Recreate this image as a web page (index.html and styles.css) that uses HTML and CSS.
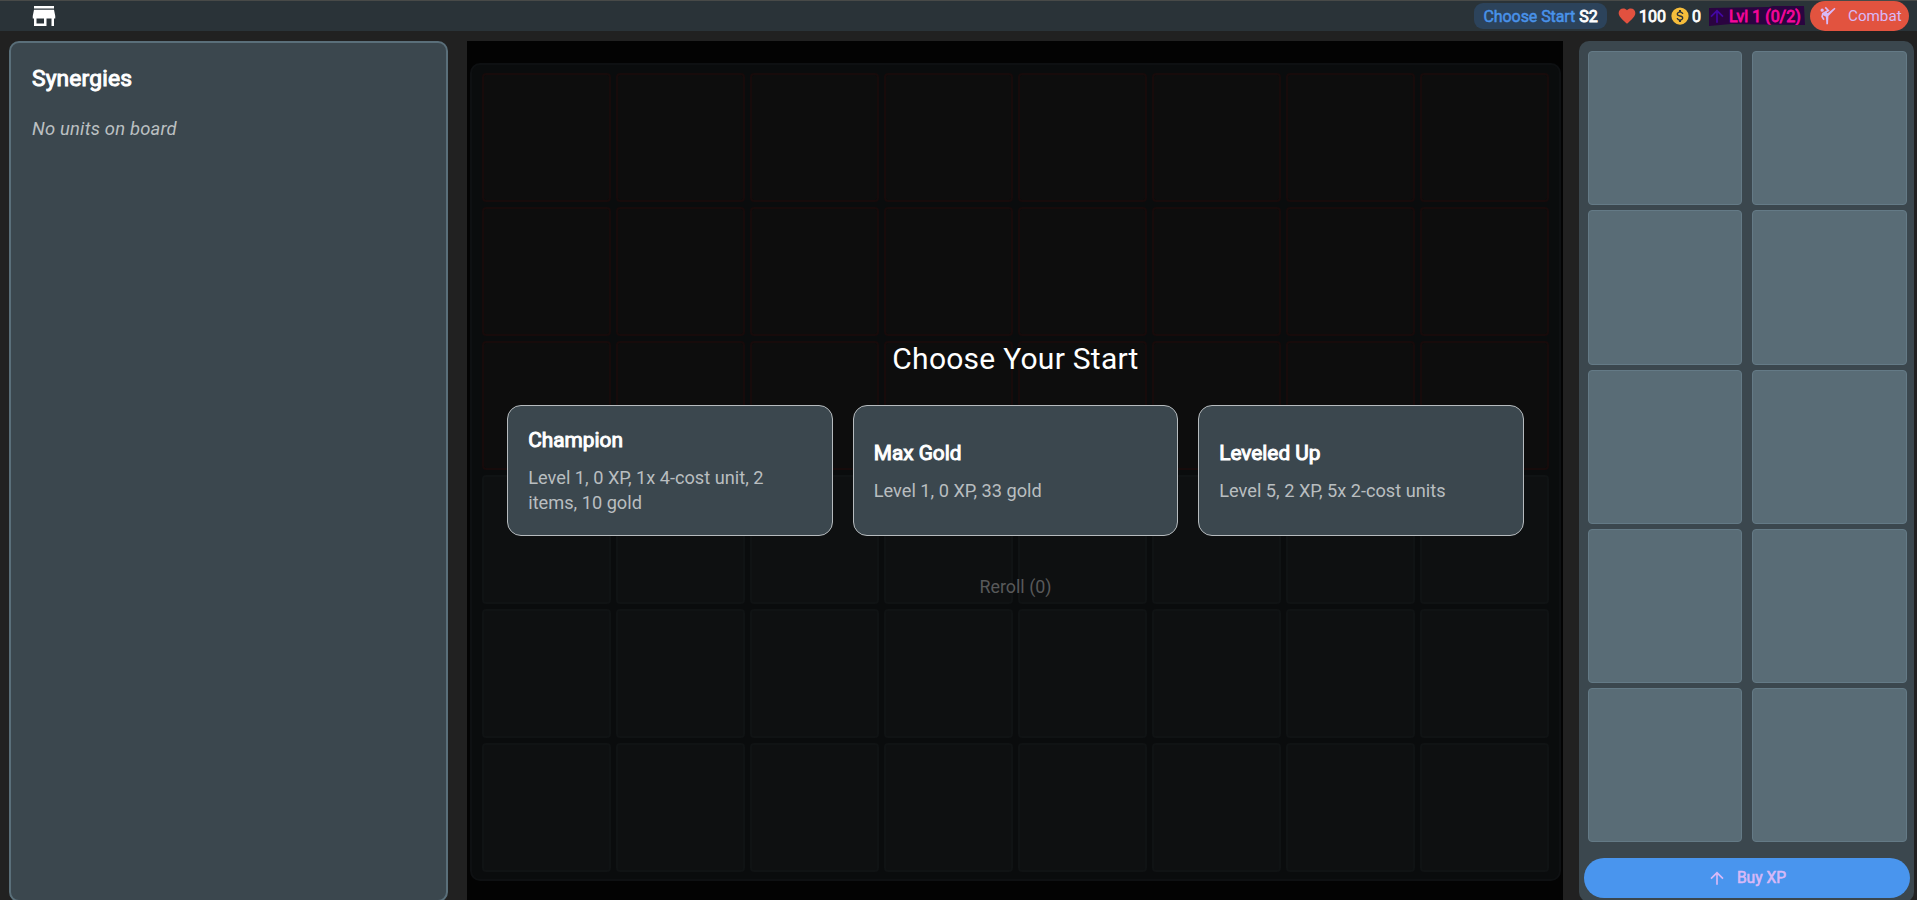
FILE: index.html
```html
<!DOCTYPE html>
<html lang="en">
<head>
<meta charset="utf-8">
<title>Choose Your Start</title>
<link rel="stylesheet" href="styles.css">
</head>
<body>
<header class="topbar">
  <svg class="store" viewBox="0 0 24 24"><path d="M12,18H6V14H12M21,14V12L20,7H4L3,12V14H4V20H14V14H18V20H20V14M20,4H4V6H20V4Z"/></svg>
  <div class="status">
    <div class="phase"><span class="phase-name">Choose Start</span><b>S2</b></div>
    <div class="stat health"><svg viewBox="0 0 24 24"><path d="M12,21.35L10.55,20.03C5.4,15.36 2,12.27 2,8.5C2,5.41 4.42,3 7.5,3C9.24,3 10.91,3.81 12,5.08C13.09,3.81 14.76,3 16.5,3C19.58,3 22,5.41 22,8.5C22,12.27 18.6,15.36 13.45,20.03L12,21.35Z"/></svg><b>100</b></div>
    <div class="stat gold"><svg viewBox="0 0 24 24"><circle cx="12" cy="12" r="11.5" fill="#f6bd3b"/><path fill="#2b3238" transform="translate(1.2 1.2) scale(.9)" d="M7,15H9C9,16.08 10.37,17 12,17C13.63,17 15,16.08 15,15C15,13.9 13.96,13.5 11.76,12.97C9.64,12.44 7,11.78 7,9C7,7.21 8.47,5.69 10.5,5.18V3H13.5V5.18C15.53,5.69 17,7.21 17,9H15C15,7.92 13.63,7 12,7C10.37,7 9,7.92 9,9C9,10.1 10.04,10.5 12.24,11.03C14.36,11.56 17,12.22 17,15C17,16.79 15.53,18.31 13.5,18.82V21H10.5V18.82C8.47,18.31 7,16.79 7,15Z"/></svg><b>0</b></div>
    <div class="level"><svg viewBox="0 0 24 24"><path d="M13,20H11V8L5.5,13.5L4.08,12.08L12,4.16L19.92,12.08L18.5,13.5L13,8V20Z"/></svg><b>Lvl 1 (0/2)</b></div>
    <button class="combat"><svg viewBox="0 0 24 24"><path d="M19.8,2L11.6,8.7L10.39,7.66L13.99,5.58L9.41,1L8,2.41L10.74,5.15L5,8.46L3.81,12.75L6.27,17L8,16L5.97,12.48L6.32,11.18L9.5,13L10,22H12L12.5,12L21,3.4L19.8,2M5,3A2,2 0 0,1 7,5A2,2 0 0,1 5,7A2,2 0 0,1 3,5A2,2 0 0,1 5,3Z"/></svg><span>Combat</span></button>
  </div>
</header>
<main class="game">
  <aside class="synergies">
    <h2>Synergies</h2>
    <p>No units on board</p>
  </aside>
  <section class="arena">
    <div class="board">
      <i class="cell foe"></i><i class="cell foe"></i><i class="cell foe"></i><i class="cell foe"></i><i class="cell foe"></i><i class="cell foe"></i><i class="cell foe"></i><i class="cell foe"></i>
      <i class="cell foe"></i><i class="cell foe"></i><i class="cell foe"></i><i class="cell foe"></i><i class="cell foe"></i><i class="cell foe"></i><i class="cell foe"></i><i class="cell foe"></i>
      <i class="cell foe"></i><i class="cell foe"></i><i class="cell foe"></i><i class="cell foe"></i><i class="cell foe"></i><i class="cell foe"></i><i class="cell foe"></i><i class="cell foe"></i>
      <i class="cell"></i><i class="cell"></i><i class="cell"></i><i class="cell"></i><i class="cell"></i><i class="cell"></i><i class="cell"></i><i class="cell"></i>
      <i class="cell"></i><i class="cell"></i><i class="cell"></i><i class="cell"></i><i class="cell"></i><i class="cell"></i><i class="cell"></i><i class="cell"></i>
      <i class="cell"></i><i class="cell"></i><i class="cell"></i><i class="cell"></i><i class="cell"></i><i class="cell"></i><i class="cell"></i><i class="cell"></i>
    </div>
    <div class="overlay">
      <h1>Choose Your Start</h1>
      <div class="choices">
        <div class="choice"><h3>Champion</h3><p>Level 1, 0 XP, 1x 4-cost unit, 2 items, 10 gold</p></div>
        <div class="choice"><h3>Max Gold</h3><p>Level 1, 0 XP, 33 gold</p></div>
        <div class="choice"><h3>Leveled Up</h3><p>Level 5, 2 XP, 5x 2-cost units</p></div>
      </div>
      <div class="reroll">Reroll (0)</div>
    </div>
  </section>
  <aside class="bench">
    <div class="slots">
      <i class="slot"></i><i class="slot"></i><i class="slot"></i><i class="slot"></i><i class="slot"></i>
      <i class="slot"></i><i class="slot"></i><i class="slot"></i><i class="slot"></i><i class="slot"></i>
    </div>
    <button class="buy"><svg viewBox="0 0 24 24"><path d="M13,20H11V8L5.5,13.5L4.08,12.08L12,4.16L19.92,12.08L18.5,13.5L13,8V20Z"/></svg><span>Buy XP</span></button>
  </aside>
</main>
</body>
</html>
```

FILE: styles.css
```css
* { box-sizing: border-box; }
body { margin: 0; height: 900px; overflow: hidden; background: #212121; color: #fff; font-family: Roboto, "Liberation Sans", sans-serif; }
h1, h2, h3, p { margin: 0; }
svg { display: block; flex: none; fill: currentColor; }
button { border: 0; font-family: inherit; padding: 0; color: #d8b9f7; }

.topbar { height: 31px; border-top: 1px solid #484a48; background: #2a3338; display: flex; justify-content: space-between; padding: 0 8px 0 29px; }
.store { width: 30px; height: 30px; }
.status { display: flex; align-items: center; font-size: 16px; white-space: nowrap; }
.status b { font-weight: 400; -webkit-text-stroke: .8px; }
.phase { width: 133px; height: 26px; border-radius: 9px; background: #2c435b; display: flex; align-items: center; padding-left: 9.5px; gap: 4px; margin-right: 10px; }
.phase-name { color: #4993ea; -webkit-text-stroke: .5px; letter-spacing: -.08px; }
.stat { display: flex; align-items: center; }
.stat svg { width: 20px; height: 20px; }
.health { gap: 2px; width: 54px; }
.health svg { color: #e2513f; }
.gold { gap: 3px; width: 38px; }
.gold svg { width: 18px; height: 18px; }
.level { width: 96px; height: 20px; display: flex; align-items: center; color: #4307a3; background: #2a0440; clip-path: polygon(0 2px, 60px 1px, 64px 0, 95px 0, 96px 19px, 22px 18px, 0 20px); }
.level svg { width: 20px; height: 20px; margin: 0 2px 0 -2px; }
.level b { color: #f5069b; }
.combat { width: 99px; height: 30px; margin-left: 5px; border-radius: 15px; background: #e2533f; display: flex; align-items: center; padding-left: 8px; font-size: 15.2px; }
.combat svg { width: 20px; height: 20px; margin-right: 10px; }

.game { display: grid; grid-template-columns: 438.5px 1096px 335px; column-gap: 19.5px; height: 861px; margin-top: 10px; padding-left: 9px; }
.synergies { border: 2px solid #5a6f7a; border-radius: 10px; background: #3b474e; padding: 22px 21px; }
.synergies h2 { font-size: 22.8px; line-height: 28px; font-weight: 400; -webkit-text-stroke: 1px; letter-spacing: .15px; }
.synergies p { font-size: 18.4px; line-height: 24px; margin-top: 24px; font-style: italic; letter-spacing: .2px; color: #bcc0c2; }

.arena { background: #030303; display: grid; }
.arena > * { grid-area: 1 / 1; }
.board { width: 1091px; height: 818px; margin: 22px 0 0 3px; border: 2px solid #0e1012; border-radius: 10px; background: #0a0c0d; display: grid; grid-template-columns: repeat(8, 129px); grid-auto-rows: 129px; gap: 5px; padding: 8px 10px; }
.cell { border: 2px solid #101314; border-radius: 4px; background: #0e1011; }
.foe { border-color: #170b0b; background: #0d0d0d; }
.overlay { z-index: 1; display: flex; flex-direction: column; align-items: center; padding: 298px 0 0 1px; }
.overlay h1 { font-size: 30px; line-height: 40px; font-weight: 400; letter-spacing: .25px; }
.choices { display: flex; gap: 20px; margin-top: 26px; }
.choice { width: 325.5px; height: 131px; border: 1px solid #b6bbbe; border-radius: 14px; background: #3b474e; padding: 1px 20px 0; display: flex; flex-direction: column; justify-content: center; }
.choice h3 { font-size: 20.8px; line-height: 26px; font-weight: 400; -webkit-text-stroke: 1px; margin-bottom: 12px; }
.choice p { font-size: 18.2px; line-height: 25px; color: #b9bec0; padding-right: 30px; }
.reroll { margin-top: 38px; font-size: 17.9px; line-height: 26px; color: #58595a; }

.bench { margin-left: -4px; width: 335px; border-radius: 10px; background: #3b474e; padding: 10px 5px 0; }
.slots { display: grid; grid-template-columns: 154.5px 154.5px; grid-auto-rows: 154.3px; gap: 5px 10px; padding-left: 4px; }
.slot { border: 1px solid #647a86; border-radius: 4px; background: #596c76; }
.buy { width: 326px; height: 40px; margin-top: 15.5px; border-radius: 20px; background: #4995ee; display: flex; align-items: center; justify-content: center; gap: 10px; padding-top: 1px; font-size: 15.6px; -webkit-text-stroke: .6px; }
.buy svg { width: 20px; height: 20px; stroke: none; }
```
